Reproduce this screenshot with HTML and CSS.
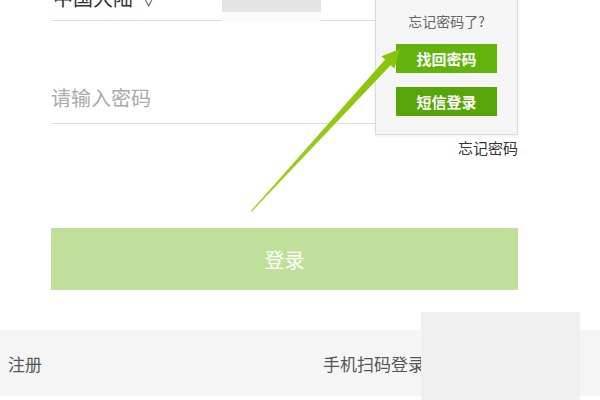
FILE: index.html
```html
<!DOCTYPE html>
<html lang="zh-CN">
<head>
    <meta charset="UTF-8">
    <meta name="viewport" content="width=device-width, initial-scale=1.0">
    <title>登录</title>
    <link rel="stylesheet" href="styles.css">
</head>
<body>
    <div class="page">
        <form class="login-form">
            <div class="field phone-field">
                <span class="region">中国大陆 <span class="chevron">∨</span></span>
                <span class="code-mask"></span>
            </div>

            <div class="field password-field">
                <span class="placeholder">请输入密码</span>
            </div>

            <div class="forgot-row">
                <a class="forgot-link">忘记密码</a>
            </div>

            <button type="button" class="login-btn">登录</button>

            <div class="forgot-popup">
                <p class="popup-title">忘记密码了?</p>
                <button type="button" class="popup-btn find-btn">找回密码</button>
                <button type="button" class="popup-btn sms-btn">短信登录</button>
            </div>
        </form>

        <div class="footer-bar">
            <a class="footer-link">注册</a>
            <a class="footer-link">手机扫码登录</a>
        </div>

        <div class="corner-mask"></div>

        <svg class="arrow" width="600" height="400" viewBox="0 0 600 400">
            <defs>
                <linearGradient id="arrow-fill" x1="0" y1="1" x2="1" y2="0">
                    <stop offset="0" stop-color="#9ed11f"/>
                    <stop offset="1" stop-color="#86c40a"/>
                </linearGradient>
            </defs>
            <polygon fill="url(#arrow-fill)"
                points="400,49 394.5,68.4 390.6,65.2 251.5,212 250.5,211.5 385.2,59.4 381.3,56.2"/>
        </svg>
    </div>
</body>
</html>
```

FILE: styles.css
```css
body {
    margin: 0;
    background: #fff;
    font-family: "Microsoft YaHei", "Noto Sans CJK SC", "Noto Sans", sans-serif;
    color: #333;
}
.page {
    position: relative;
    width: 600px;
    height: 400px;
    overflow: hidden;
}
.login-form {
    position: relative;
    display: flow-root;
    margin: 0 82px 0 51px;
}
.field {
    display: flex;
    border-bottom: 1px solid #dedede;
    box-sizing: border-box;
}
.phone-field {
    position: relative;
    margin-top: -14px;
    height: 35px;
    align-items: flex-start;
}
.region {
    font-size: 20px;
    line-height: 24px;
    color: #333;
    padding-left: 2px;
}
.chevron {
    font-size: 14px;
    margin-left: 4px;
    color: #555;
}
.code-mask {
    position: absolute;
    left: 171px;
    top: 14px;
    width: 99px;
    height: 22px;
    background: linear-gradient(#e4e4e4 0 12px, #fbfbfb 12px);
}
.password-field {
    height: 103px;
    align-items: flex-end;
    padding-bottom: 11px;
}
.placeholder {
    font-size: 20px;
    line-height: 28px;
    color: #aaa;
}
.forgot-row {
    display: flex;
    justify-content: flex-end;
    margin-top: 14px;
}
.forgot-link {
    font-size: 15px;
    line-height: 20px;
    color: #333;
}
.login-btn {
    display: block;
    width: 100%;
    height: 62px;
    margin-top: 70px;
    border: none;
    background: #c0df9a;
    color: #fff;
    font-family: inherit;
    font-size: 20px;
}
.forgot-popup {
    position: absolute;
    top: -10px;
    right: 0;
    width: 143px;
    box-sizing: border-box;
    padding: 20px 0 18px 20px;
    background: #f5f5f5;
    border: 1px solid #dcdcdc;
    box-shadow: 0 1px 3px rgba(0, 0, 0, 0.08);
}
.popup-title {
    margin: 0 0 13px -20px;
    text-align: center;
    font-size: 14px;
    line-height: 20px;
    color: #666;
}
.popup-btn {
    display: block;
    width: 101px;
    height: 29px;
    border: none;
    color: #fff;
    font-family: inherit;
    font-size: 15px;
    font-weight: bold;
}
.find-btn {
    background: #62b30c;
    margin-bottom: 14px;
}
.sms-btn {
    background: #58a509;
}
.footer-bar {
    display: flex;
    justify-content: space-between;
    align-items: center;
    height: 66px;
    margin-top: 40px;
    padding: 0 175px 0 8px;
    background: #f5f5f5;
}
.footer-link {
    font-size: 17px;
    color: #555;
}
.corner-mask {
    position: absolute;
    left: 421px;
    top: 312px;
    width: 159px;
    height: 88px;
    background: #efefef;
}
.arrow {
    position: absolute;
    left: 0;
    top: 0;
    pointer-events: none;
}
```
